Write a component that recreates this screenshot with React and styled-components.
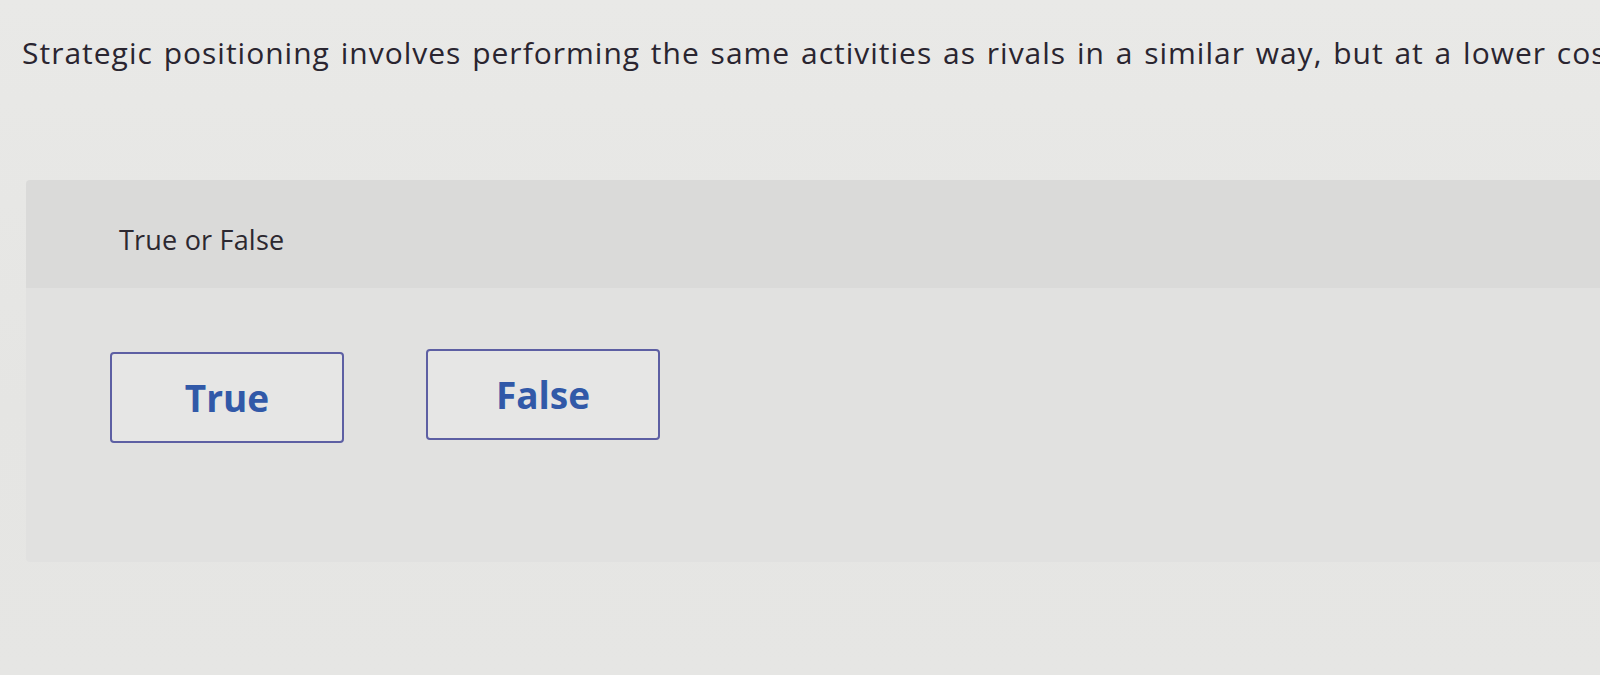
import styled, { createGlobalStyle } from "styled-components";

const GlobalStyle = createGlobalStyle`
  html, body {
    margin: 0;
    padding: 0;
    background: #e7e7e5;
    overflow: hidden;
  }
  body {
    font-family: "Open Sans", Lato, Arial, sans-serif;
    font-variant-ligatures: none;
  }
`;

const Page = styled.div`
  width: 1600px;
  height: 675px;
  background: linear-gradient(180deg, #e9e9e7 0%, #e5e5e3 60%, #e6e6e4 100%);
  overflow: hidden;
`;

const Question = styled.h2`
  margin: 0;
  padding: 34px 0 0 22px;
  font-size: 30px;
  line-height: 38px;
  font-weight: 400;
  letter-spacing: 1px;
  word-spacing: 2px;
  color: #2a2530;
  white-space: nowrap;
`;

const Panel = styled.section`
  margin: 108px 0 0 26px;
  border-radius: 4px 0 0 4px;
  overflow: hidden;
`;

const PanelHeader = styled.div`
  height: 108px;
  box-sizing: border-box;
  padding: 41px 0 0 93px;
  background: #dadad9;
  font-size: 27px;
  line-height: 38px;
  letter-spacing: 0.2px;
  color: #2c2830;
`;

const PanelBody = styled.div`
  height: 274px;
  box-sizing: border-box;
  padding: 63px 0 0 84px;
  background: #e1e1e0;
  display: flex;
  gap: 82px;
  align-items: flex-start;
`;

const Choice = styled.button`
  width: 234px;
  height: 91px;
  box-sizing: border-box;
  border: 2px solid #5d5fa3;
  border-radius: 4px;
  background: #e6e6e5;
  color: #3159a8;
  font-family: "Open Sans", Lato, Arial, sans-serif;
  font-size: 37px;
  font-weight: 700;
  cursor: pointer;
  padding: 0;
  margin-top: ${(p) => p.$offset || 0}px;
`;

export default function App() {
  return (
    <Page>
      <GlobalStyle />
      <Question>
        Strategic positioning involves performing the same activities as rivals in a similar way, but at a lower cost.
      </Question>
      <Panel>
        <PanelHeader>True or False</PanelHeader>
        <PanelBody>
          <Choice $offset={1}>True</Choice>
          <Choice $offset={-2}>False</Choice>
        </PanelBody>
      </Panel>
    </Page>
  );
}
